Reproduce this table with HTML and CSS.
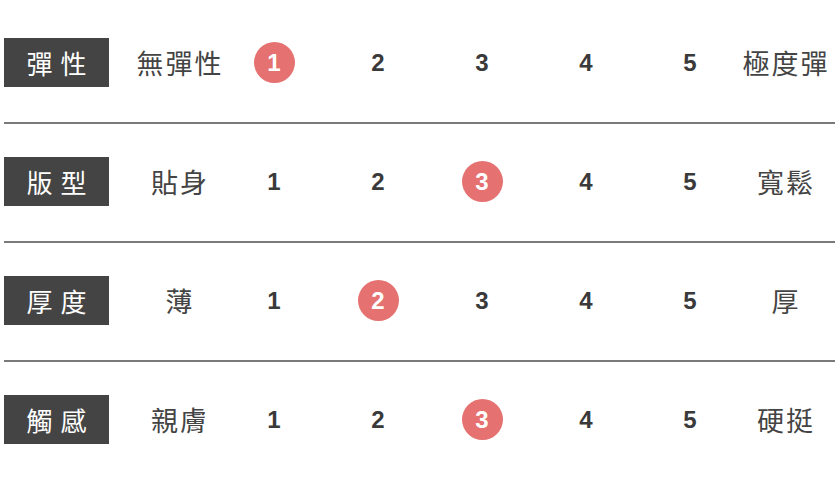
FILE: index.html
```html
<!DOCTYPE html>
<html lang="zh-Hant">
<head>
<meta charset="utf-8">
<title>商品特性</title>
<link rel="stylesheet" href="styles.css">
</head>
<body>
<div class="chart">
  <div class="row">
    <div class="label">彈性</div>
    <div class="word"><span>無彈性</span></div>
    <div class="num"><span class="dot">1</span></div>
    <div class="num">2</div>
    <div class="num">3</div>
    <div class="num">4</div>
    <div class="num">5</div>
    <div class="word"><span>極度彈</span></div>
  </div>
  <div class="row">
    <div class="label">版型</div>
    <div class="word"><span>貼身</span></div>
    <div class="num">1</div>
    <div class="num">2</div>
    <div class="num"><span class="dot">3</span></div>
    <div class="num">4</div>
    <div class="num">5</div>
    <div class="word"><span>寬鬆</span></div>
  </div>
  <div class="row">
    <div class="label">厚度</div>
    <div class="word"><span>薄</span></div>
    <div class="num">1</div>
    <div class="num"><span class="dot">2</span></div>
    <div class="num">3</div>
    <div class="num">4</div>
    <div class="num">5</div>
    <div class="word"><span>厚</span></div>
  </div>
  <div class="row">
    <div class="label">觸感</div>
    <div class="word"><span>親膚</span></div>
    <div class="num">1</div>
    <div class="num">2</div>
    <div class="num"><span class="dot">3</span></div>
    <div class="num">4</div>
    <div class="num">5</div>
    <div class="word"><span>硬挺</span></div>
  </div>
</div>
</body>
</html>
```
FILE: styles.css
```css
html, body {
  margin: 0;
  padding: 0;
  background: #ffffff;
}

body {
  font-family: "Noto Sans CJK TC", "Noto Sans", sans-serif;
  color: #444444;
}

.chart {
  width: 831px;
  margin-left: 4px;
  padding-top: 5px;
}

.row {
  display: grid;
  grid-template-columns: 132px 86px repeat(5, 104px) 86px;
  align-items: center;
  height: 49px;
  padding: 33px 0 35px;
}

.row + .row {
  border-top: 2px solid #7a7a7a;
}

.label {
  width: 105px;
  height: 49px;
  box-sizing: border-box;
  padding-left: 8px;
  background: #444444;
  color: #ffffff;
  font-size: 26px;
  letter-spacing: 8px;
  line-height: 49px;
  text-align: center;
  white-space: nowrap;
}

.word {
  display: flex;
  justify-content: center;
  font-size: 27px;
  line-height: 49px;
  white-space: nowrap;
}

.word span {
  letter-spacing: 2px;
  padding-left: 2px;
}

.num {
  display: flex;
  justify-content: center;
  align-items: center;
  font-family: "Liberation Sans", Arial, sans-serif;
  font-weight: bold;
  font-size: 24px;
  color: #3a3a3a;
  line-height: 49px;
}

.dot {
  display: flex;
  justify-content: center;
  align-items: center;
  width: 41px;
  height: 41px;
  border-radius: 50%;
  background: #e57171;
  color: #ffffff;
  line-height: 1;
}
```
